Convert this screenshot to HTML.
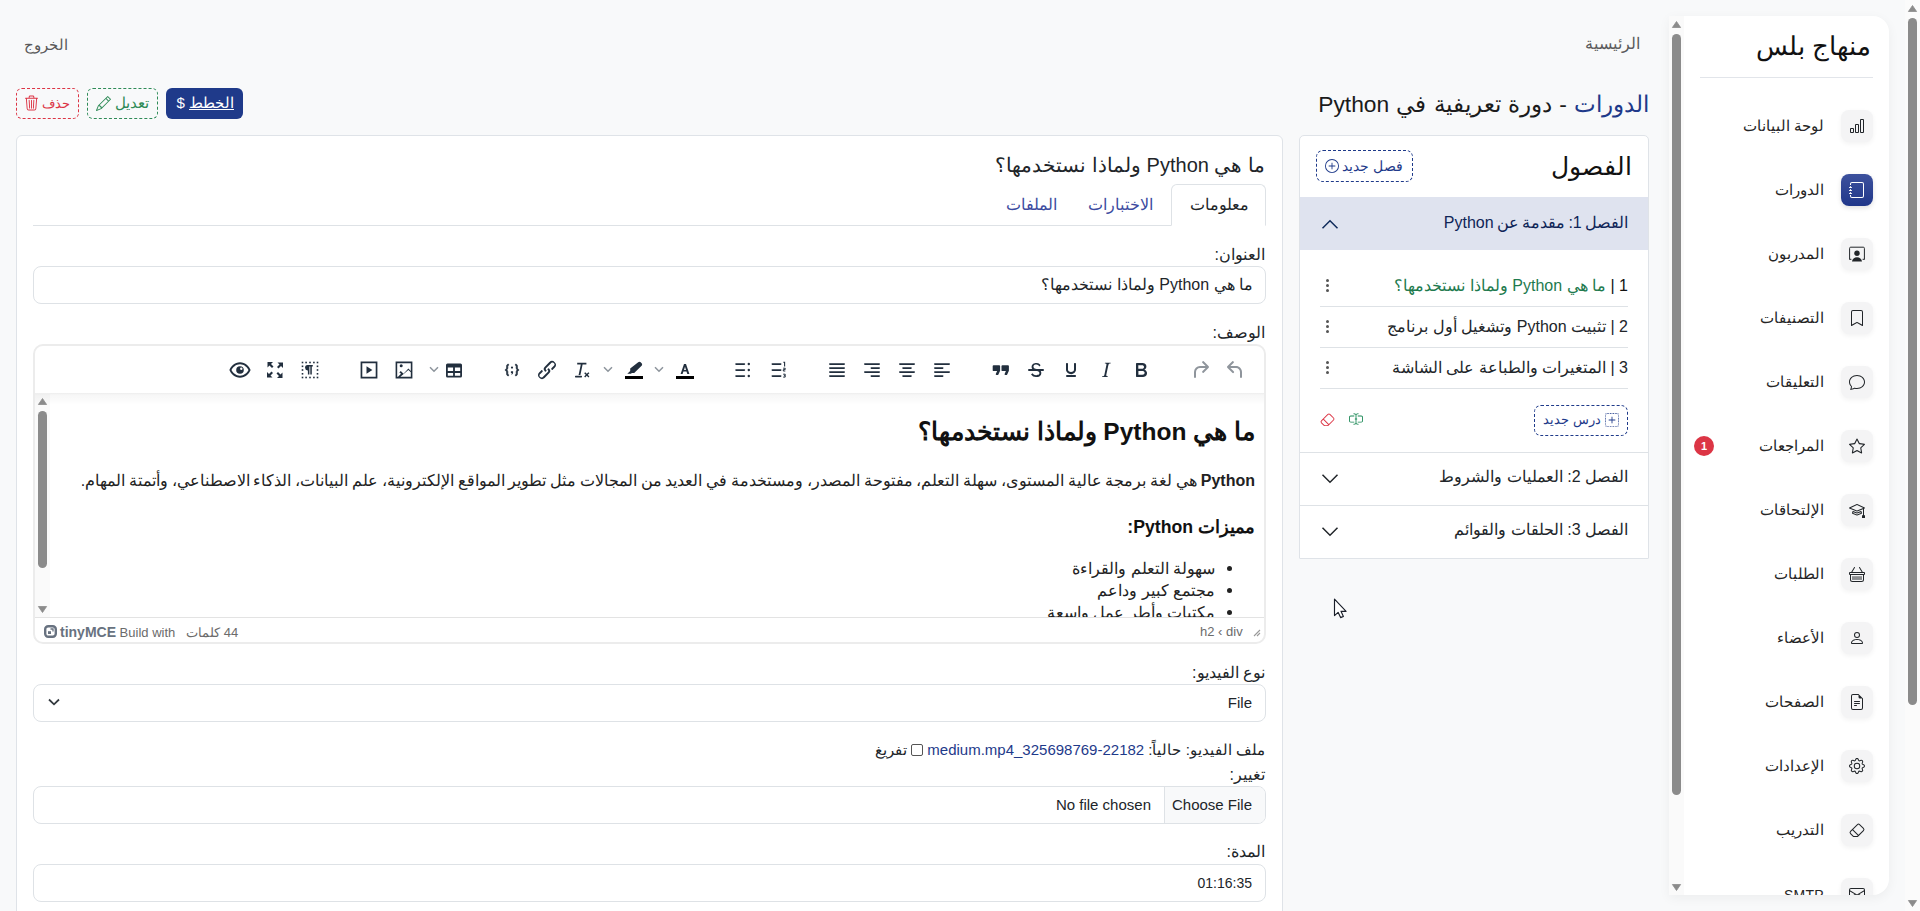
<!DOCTYPE html>
<html dir="rtl" lang="ar">
<head>
<meta charset="utf-8">
<title>منهاج بلس</title>
<style>
*{box-sizing:border-box;margin:0;padding:0}
html,body{width:1920px;height:911px;overflow:hidden}
body{background:#f8f9fa;font-family:"Liberation Sans",sans-serif;color:#212529;position:relative;font-size:16px}
.a{position:absolute;white-space:nowrap}
svg.a{display:block;overflow:visible}
.thumb{position:absolute;background:#8b8b8b;border-radius:5px}
.card{position:absolute;background:#fff;border:1px solid #dfe3e8;border-radius:6px}
</style>
</head>
<body>
<div class="a" style="left:1905px;top:0;width:15px;height:911px;background:#fbfbfb"></div>
<svg class="a" style="left:1908px;top:5px" width="9" height="7" viewBox="0 0 9 7"><path d="M4.5 0.5 L8.6 6.5 L0.4 6.5Z" fill="#8b8b8b" stroke="#8b8b8b" stroke-width="0.8" stroke-linejoin="round"/></svg>
<div class="thumb" style="left:1908px;top:18px;width:9px;height:687px"></div>
<svg class="a" style="left:1908px;top:900px" width="9" height="7" viewBox="0 0 9 7"><path d="M0.4 0.5 L8.6 0.5 L4.5 6.5Z" fill="#8b8b8b" stroke="#8b8b8b" stroke-width="0.8" stroke-linejoin="round"/></svg>
<div class="a" style="left:1669px;top:16px;width:220px;height:879px;background:#fff;border-radius:0 16px 16px 0;box-shadow:0 3px 12px rgba(0,0,0,.05)"></div>
<div class="a" style="left:1669px;top:16px;width:220px;height:879px;overflow:hidden;border-radius:0 16px 16px 0"><div class="a" style="left:0;top:0;width:15px;height:879px;background:#fafafa"></div><svg class="a" style="left:3px;top:5px" width="9" height="7" viewBox="0 0 9 7"><path d="M4.5 0.5 L8.6 6.5 L0.4 6.5Z" fill="#8b8b8b" stroke="#8b8b8b" stroke-width="0.8" stroke-linejoin="round"/></svg><div class="thumb" style="left:3px;top:18px;width:9px;height:761px"></div><svg class="a" style="left:3px;top:868px" width="9" height="7" viewBox="0 0 9 7"><path d="M0.4 0.5 L8.6 0.5 L4.5 6.5Z" fill="#8b8b8b" stroke="#8b8b8b" stroke-width="0.8" stroke-linejoin="round"/></svg><div class="a" style="right:18px;top:15px;font-size:25.5px;line-height:30px;color:#111">منهاج بلس</div><div class="a" style="left:31px;top:61px;width:173px;height:1px;background:#e2e5ea"></div><div class="a" style="left:172px;top:94px;width:32px;height:32px;border-radius:8px;background:#f4f4f5;box-shadow:0 2px 5px rgba(0,0,0,.05)"></div><svg class="a" style="left:180px;top:102px" width="16" height="16" viewBox="0 0 16 16" fill="#212529"><path d="M4 11H2v3h2zm5-4H7v7h2zm5-5v12h-2V2zm-2-1a1 1 0 0 0-1 1v12a1 1 0 0 0 1 1h2a1 1 0 0 0 1-1V2a1 1 0 0 0-1-1zM6 7a1 1 0 0 1 1-1h2a1 1 0 0 1 1 1v7a1 1 0 0 1-1 1H7a1 1 0 0 1-1-1zm-5 4a1 1 0 0 1 1-1h2a1 1 0 0 1 1 1v3a1 1 0 0 1-1 1H2a1 1 0 0 1-1-1z"/></svg><div class="a" style="right:65px;top:100px;font-size:15px;line-height:20px;color:#252525">لوحة البيانات</div><div class="a" style="left:172px;top:158px;width:32px;height:32px;border-radius:8px;background:linear-gradient(180deg,#3d519d,#20378a);box-shadow:0 2px 5px rgba(0,0,0,.12)"></div><svg class="a" style="left:180px;top:166px" width="16" height="16" viewBox="0 0 16 16" fill="#212529"><path fill="#fff" d="M3 0h10a2 2 0 0 1 2 2v12a2 2 0 0 1-2 2H3a2 2 0 0 1-2-2v-1h1v1a1 1 0 0 0 1 1h10a1 1 0 0 0 1-1V2a1 1 0 0 0-1-1H3a1 1 0 0 0-1 1v1H1V2a2 2 0 0 1 2-2"/><path fill="#fff" d="M1 5v-.5a.5.5 0 0 1 1 0V5h.5a.5.5 0 0 1 0 1h-2a.5.5 0 0 1 0-1zm0 3v-.5a.5.5 0 0 1 1 0V8h.5a.5.5 0 0 1 0 1h-2a.5.5 0 0 1 0-1zm0 3v-.5a.5.5 0 0 1 1 0v.5h.5a.5.5 0 0 1 0 1h-2a.5.5 0 0 1 0-1z"/></svg><div class="a" style="right:65px;top:164px;font-size:15px;line-height:20px;color:#252525">الدورات</div><div class="a" style="left:172px;top:222px;width:32px;height:32px;border-radius:8px;background:#f4f4f5;box-shadow:0 2px 5px rgba(0,0,0,.05)"></div><svg class="a" style="left:180px;top:230px" width="16" height="16" viewBox="0 0 16 16" fill="#212529"><path d="M.6 13.6V2.3a1.1 1.1 0 0 1 1.100-1.100h12.600a1.1 1.1 0 0 1 1.100 1.100v11.300" fill="none" stroke="#212529" stroke-width="1"/><path d="M.6 13.3h1.800M15.400 13.300h-1.800" stroke="#212529" stroke-width="1"/><circle cx="8" cy="7.3" r="2.700"/><path d="M3 15.600c.3-2.800 2.300-4.400 5-4.400s4.700 1.600 5 4.400Z"/></svg><div class="a" style="right:65px;top:228px;font-size:15px;line-height:20px;color:#252525">المدربون</div><div class="a" style="left:172px;top:286px;width:32px;height:32px;border-radius:8px;background:#f4f4f5;box-shadow:0 2px 5px rgba(0,0,0,.05)"></div><svg class="a" style="left:180px;top:294px" width="16" height="16" viewBox="0 0 16 16" fill="#212529"><path d="M2 2a2 2 0 0 1 2-2h8a2 2 0 0 1 2 2v13.5a.5.5 0 0 1-.777.416L8 13.101l-5.223 2.815A.5.5 0 0 1 2 15.5zm2-1a1 1 0 0 0-1 1v12.566l4.723-2.482a.5.5 0 0 1 .554 0L13 14.566V2a1 1 0 0 0-1-1z"/></svg><div class="a" style="right:65px;top:292px;font-size:15px;line-height:20px;color:#252525">التصنيفات</div><div class="a" style="left:172px;top:350px;width:32px;height:32px;border-radius:8px;background:#f4f4f5;box-shadow:0 2px 5px rgba(0,0,0,.05)"></div><svg class="a" style="left:180px;top:358px" width="16" height="16" viewBox="0 0 16 16" fill="#212529"><path d="M2.678 11.894a1 1 0 0 1 .287.801 11 11 0 0 1-.398 2c1.395-.323 2.247-.697 2.634-.893a1 1 0 0 1 .71-.074A8 8 0 0 0 8 14c3.996 0 7-2.807 7-6s-3.004-6-7-6-7 2.808-7 6c0 1.468.617 2.83 1.678 3.894m-.493 3.905a22 22 0 0 1-.713.129c-.2.032-.352-.176-.273-.362a10 10 0 0 0 .244-.637l.003-.01c.248-.72.45-1.548.524-2.319C.743 11.37 0 9.76 0 8c0-3.866 3.582-7 8-7s8 3.134 8 7-3.582 7-8 7a9 9 0 0 1-2.347-.306c-.52.263-1.639.742-3.468 1.105"/></svg><div class="a" style="right:65px;top:356px;font-size:15px;line-height:20px;color:#252525">التعليقات</div><div class="a" style="left:172px;top:414px;width:32px;height:32px;border-radius:8px;background:#f4f4f5;box-shadow:0 2px 5px rgba(0,0,0,.05)"></div><svg class="a" style="left:180px;top:422px" width="16" height="16" viewBox="0 0 16 16" fill="#212529"><path d="M2.866 14.85c-.078.444.36.791.746.593l4.39-2.256 4.389 2.256c.386.198.824-.149.746-.592l-.83-4.73 3.522-3.356c.33-.314.16-.888-.282-.95l-4.898-.696L8.465.792a.513.513 0 0 0-.927 0L5.354 5.12l-4.898.696c-.441.062-.612.636-.283.95l3.523 3.356-.83 4.73zm4.905-2.767-3.686 1.894.694-3.957a.56.56 0 0 0-.163-.505L1.71 6.745l4.052-.576a.53.53 0 0 0 .393-.288L8 2.223l1.847 3.658a.53.53 0 0 0 .393.288l4.052.575-2.906 2.77a.56.56 0 0 0-.163.506l.694 3.957-3.686-1.894a.5.5 0 0 0-.461 0z"/></svg><div class="a" style="right:65px;top:420px;font-size:15px;line-height:20px;color:#252525">المراجعات</div><div class="a" style="left:172px;top:478px;width:32px;height:32px;border-radius:8px;background:#f4f4f5;box-shadow:0 2px 5px rgba(0,0,0,.05)"></div><svg class="a" style="left:180px;top:486px" width="16" height="16" viewBox="0 0 16 16" fill="#212529"><path d="M8.211 2.047a.5.5 0 0 0-.422 0l-7.5 3.5a.5.5 0 0 0 .025.917l7.5 3a.5.5 0 0 0 .372 0L14 7.14V13a1 1 0 0 0-1 1v2h3v-2a1 1 0 0 0-1-1V6.739l.686-.275a.5.5 0 0 0 .025-.917zM8 8.46 1.758 5.965 8 3.052l6.242 2.913z"/><path d="M4.176 9.032a.5.5 0 0 0-.656.327l-.5 1.7a.5.5 0 0 0 .294.605l4.5 1.8a.5.5 0 0 0 .372 0l4.5-1.8a.5.5 0 0 0 .294-.605l-.5-1.7a.5.5 0 0 0-.656-.327L8 10.466zm-.068 1.873.22-.748 3.496 1.311a.5.5 0 0 0 .352 0l3.496-1.311.22.748L8 12.46z"/></svg><div class="a" style="right:65px;top:484px;font-size:15px;line-height:20px;color:#252525">الإلتحاقات</div><div class="a" style="left:172px;top:542px;width:32px;height:32px;border-radius:8px;background:#f4f4f5;box-shadow:0 2px 5px rgba(0,0,0,.05)"></div><svg class="a" style="left:180px;top:550px" width="16" height="16" viewBox="0 0 16 16" fill="#212529"><path d="M5.757 1.071a.5.5 0 0 1 .172.686L3.383 6h9.234L10.07 1.757a.5.5 0 1 1 .858-.514L13.783 6H15a1 1 0 0 1 1 1v1a1 1 0 0 1-1 1v4.5a2.5 2.5 0 0 1-2.5 2.5h-9A2.5 2.5 0 0 1 1 13.5V9a1 1 0 0 1-1-1V7a1 1 0 0 1 1-1h1.217L5.07 1.243a.5.5 0 0 1 .686-.172zM2 9v4.5A1.5 1.5 0 0 0 3.5 15h9a1.5 1.5 0 0 0 1.5-1.5V9zM1 7v1h14V7zm3 3a.5.5 0 0 1 .5.5v3a.5.5 0 0 1-1 0v-3A.5.5 0 0 1 4 10m2 0a.5.5 0 0 1 .5.5v3a.5.5 0 0 1-1 0v-3A.5.5 0 0 1 6 10m2 0a.5.5 0 0 1 .5.5v3a.5.5 0 0 1-1 0v-3A.5.5 0 0 1 8 10m2 0a.5.5 0 0 1 .5.5v3a.5.5 0 0 1-1 0v-3a.5.5 0 0 1 .5-.5m2 0a.5.5 0 0 1 .5.5v3a.5.5 0 0 1-1 0v-3a.5.5 0 0 1 .5-.5"/></svg><div class="a" style="right:65px;top:548px;font-size:15px;line-height:20px;color:#252525">الطلبات</div><div class="a" style="left:172px;top:606px;width:32px;height:32px;border-radius:8px;background:#f4f4f5;box-shadow:0 2px 5px rgba(0,0,0,.05)"></div><svg class="a" style="left:180px;top:614px" width="16" height="16" viewBox="0 0 16 16" fill="#212529"><path d="M8 8a3 3 0 1 0 0-6 3 3 0 0 0 0 6m2-3a2 2 0 1 1-4 0 2 2 0 0 1 4 0m4 8c0 1-1 1-1 1H3s-1 0-1-1 1-4 6-4 6 3 6 4m-1-.004c-.001-.246-.154-.986-.832-1.664C11.516 10.68 10.289 10 8 10s-3.516.68-4.168 1.332c-.678.678-.83 1.418-.832 1.664z"/></svg><div class="a" style="right:65px;top:612px;font-size:15px;line-height:20px;color:#252525">الأعضاء</div><div class="a" style="left:172px;top:670px;width:32px;height:32px;border-radius:8px;background:#f4f4f5;box-shadow:0 2px 5px rgba(0,0,0,.05)"></div><svg class="a" style="left:180px;top:678px" width="16" height="16" viewBox="0 0 16 16" fill="#212529"><path d="M5.5 7a.5.5 0 0 0 0 1h5a.5.5 0 0 0 0-1zM5 9.5a.5.5 0 0 1 .5-.5h5a.5.5 0 0 1 0 1h-5a.5.5 0 0 1-.5-.5m0 2a.5.5 0 0 1 .5-.5h2a.5.5 0 0 1 0 1h-2a.5.5 0 0 1-.5-.5"/><path d="M9.5 0H4a2 2 0 0 0-2 2v12a2 2 0 0 0 2 2h8a2 2 0 0 0 2-2V4.5zm0 1v2A1.5 1.5 0 0 0 11 4.5h2V14a1 1 0 0 1-1 1H4a1 1 0 0 1-1-1V2a1 1 0 0 1 1-1z"/></svg><div class="a" style="right:65px;top:676px;font-size:15px;line-height:20px;color:#252525">الصفحات</div><div class="a" style="left:172px;top:734px;width:32px;height:32px;border-radius:8px;background:#f4f4f5;box-shadow:0 2px 5px rgba(0,0,0,.05)"></div><svg class="a" style="left:180px;top:742px" width="16" height="16" viewBox="0 0 16 16" fill="#212529"><path d="M8 4.754a3.246 3.246 0 1 0 0 6.492 3.246 3.246 0 0 0 0-6.492M5.754 8a2.246 2.246 0 1 1 4.492 0 2.246 2.246 0 0 1-4.492 0"/><path d="M9.796 1.343c-.527-1.79-3.065-1.79-3.592 0l-.094.319a.873.873 0 0 1-1.255.52l-.292-.16c-1.64-.892-3.433.902-2.54 2.541l.159.292a.873.873 0 0 1-.52 1.255l-.319.094c-1.79.527-1.79 3.065 0 3.592l.319.094a.873.873 0 0 1 .52 1.255l-.16.292c-.892 1.64.901 3.434 2.541 2.54l.292-.159a.873.873 0 0 1 1.255.52l.094.319c.527 1.79 3.065 1.79 3.592 0l.094-.319a.873.873 0 0 1 1.255-.52l.292.16c1.64.893 3.434-.902 2.54-2.541l-.159-.292a.873.873 0 0 1 .52-1.255l.319-.094c1.79-.527 1.79-3.065 0-3.592l-.319-.094a.873.873 0 0 1-.52-1.255l.16-.292c.893-1.64-.902-3.433-2.541-2.54l-.292.159a.873.873 0 0 1-1.255-.52zm-2.633.283c.246-.835 1.428-.835 1.674 0l.094.319a1.873 1.873 0 0 0 2.693 1.115l.291-.16c.764-.415 1.6.42 1.184 1.185l-.159.292a1.873 1.873 0 0 0 1.116 2.692l.318.094c.835.246.835 1.428 0 1.674l-.319.094a1.873 1.873 0 0 0-1.115 2.693l.16.291c.415.764-.42 1.6-1.185 1.184l-.291-.159a1.873 1.873 0 0 0-2.693 1.116l-.094.318c-.246.835-1.428.835-1.674 0l-.094-.319a1.873 1.873 0 0 0-2.692-1.115l-.292.16c-.764.415-1.6-.42-1.184-1.185l.159-.291A1.873 1.873 0 0 0 1.945 8.93l-.319-.094c-.835-.246-.835-1.428 0-1.674l.319-.094A1.873 1.873 0 0 0 3.06 4.377l-.16-.292c-.415-.764.42-1.6 1.185-1.184l.292.159a1.873 1.873 0 0 0 2.692-1.115z"/></svg><div class="a" style="right:65px;top:740px;font-size:15px;line-height:20px;color:#252525">الإعدادات</div><div class="a" style="left:172px;top:798px;width:32px;height:32px;border-radius:8px;background:#f4f4f5;box-shadow:0 2px 5px rgba(0,0,0,.05)"></div><svg class="a" style="left:180px;top:806px" width="16" height="16" viewBox="0 0 16 16" fill="#212529"><path d="M8.086 2.207a2 2 0 0 1 2.828 0l3.879 3.879a2 2 0 0 1 0 2.828l-5.5 5.5A2 2 0 0 1 7.879 15H5.12a2 2 0 0 1-1.414-.586l-2.5-2.5a2 2 0 0 1 0-2.828zm2.121.707a1 1 0 0 0-1.414 0L4.16 7.547l5.293 5.293 4.633-4.633a1 1 0 0 0 0-1.414zM8.746 13.547 3.453 8.254 1.914 9.793a1 1 0 0 0 0 1.414l2.5 2.5a1 1 0 0 0 .707.293H7.88a1 1 0 0 0 .707-.293z"/></svg><div class="a" style="right:65px;top:804px;font-size:15px;line-height:20px;color:#252525">التدريب</div><div class="a" style="left:172px;top:862px;width:32px;height:32px;border-radius:8px;background:#f4f4f5;box-shadow:0 2px 5px rgba(0,0,0,.05)"></div><svg class="a" style="left:180px;top:870px" width="16" height="16" viewBox="0 0 16 16" fill="#212529"><path d="M0 4a2 2 0 0 1 2-2h12a2 2 0 0 1 2 2v8a2 2 0 0 1-2 2H2a2 2 0 0 1-2-2zm2-1a1 1 0 0 0-1 1v.217l7 4.2 7-4.2V4a1 1 0 0 0-1-1zm13 2.383-4.708 2.825L15 11.105zm-.034 6.876-5.64-3.471L8 9.583l-1.326-.795-5.64 3.47A1 1 0 0 0 2 13h12a1 1 0 0 0 .966-.741M1 11.105l4.708-2.897L1 5.383z"/></svg><div class="a" style="right:65px;top:868px;font-size:14px;line-height:22px;color:#252525;letter-spacing:.3px">SMTP</div><div class="a" style="left:25px;top:420px;width:20px;height:20px;border-radius:10px;background:#dc3545;color:#fff;font-size:11px;line-height:20px;text-align:center;font-weight:bold">1</div></div>
<div class="a" style="right:280px;top:34px;font-size:16px;line-height:20px;color:#5a5a5a;">الرئيسية</div>
<div class="a" style="right:1852px;top:35px;font-size:15px;line-height:20px;color:#5a5a5a;">الخروج</div>
<div class="a" style="right:271px;top:90px;font-size:22.8px;line-height:28px;color:#1b1b1b;word-spacing:0.9px"><span style="color:#1e3a8a">الدورات</span> - دورة تعريفية في Python</div>
<div class="a" style="left:166px;top:88px;width:77px;height:31px;border-radius:6px;background:#1f3a8a"></div>
<div class="a" style="right:1686px;top:93px;font-size:15px;line-height:20px;color:#fff;"><span style="text-decoration:underline;text-underline-offset:1px">الخطط</span> $</div>
<div class="a" style="left:87px;top:88px;width:71px;height:31px;border-radius:6px;border:1px dashed #2e8b57"></div>
<div class="a" style="right:1771px;top:93px;font-size:15px;line-height:20px;color:#2e8b57;">تعديل</div>
<svg class="a" style="left:96px;top:96px;" width="15" height="15" viewBox="0 0 16 16"><path fill="#2e8b57" d="M12.146.146a.5.5 0 0 1 .708 0l3 3a.5.5 0 0 1 0 .708l-10 10a.5.5 0 0 1-.168.11l-5 2a.5.5 0 0 1-.65-.65l2-5a.5.5 0 0 1 .11-.168zM11.207 2.5 13.5 4.793 14.793 3.5 12.5 1.207zm1.586 3L10.5 3.207 4 9.707V10h.5a.5.5 0 0 1 .5.5v.5h.5a.5.5 0 0 1 .5.5v.5h.293zm-9.761 5.175-.106.106-1.528 3.821 3.821-1.528.106-.106A.5.5 0 0 1 5 12.5V12h-.5a.5.5 0 0 1-.5-.5V11h-.5a.5.5 0 0 1-.468-.325"/></svg>
<div class="a" style="left:16px;top:88px;width:63px;height:31px;border-radius:6px;border:1px dashed #dc3545"></div>
<div class="a" style="right:1850px;top:94px;font-size:13px;line-height:20px;color:#dc3545;">حذف</div>
<svg class="a" style="left:24px;top:95px;" width="15" height="16" viewBox="0 0 16 16"><path fill="#dc3545" d="M6.5 1h3a.5.5 0 0 1 .5.5v1H6v-1a.5.5 0 0 1 .5-.5M11 2.5v-1A1.5 1.5 0 0 0 9.5 0h-3A1.5 1.5 0 0 0 5 1.5v1H1.5a.5.5 0 0 0 0 1h.538l.853 10.66A2 2 0 0 0 4.885 16h6.23a2 2 0 0 0 1.994-1.84l.853-10.66h.538a.5.5 0 0 0 0-1zm1.958 1-.846 10.58a1 1 0 0 1-.997.92h-6.23a1 1 0 0 1-.997-.92L3.042 3.5zm-7.487 1a.5.5 0 0 1 .528.47l.5 8.5a.5.5 0 0 1-.998.06L5 5.03a.5.5 0 0 1 .47-.53Zm5.058 0a.5.5 0 0 1 .47.53l-.5 8.5a.5.5 0 1 1-.998-.06l.5-8.5a.5.5 0 0 1 .528-.47M8 4.5a.5.5 0 0 1 .5.5v8.5a.5.5 0 0 1-1 0V5a.5.5 0 0 1 .5-.5"/></svg>
<div class="card" style="left:16px;top:135px;width:1267px;height:800px"></div>
<div class="a" style="right:655px;top:152px;font-size:20px;line-height:26px;color:#212529;">ما هي Python ولماذا نستخدمها؟</div>
<div class="a" style="left:33px;top:225px;width:1232px;height:1px;background:#dee2e6"></div>
<div class="a" style="left:1171px;top:184px;width:95px;height:42px;background:#fff;border:1px solid #dee2e6;border-bottom-color:#fff;border-radius:6px 6px 0 0"></div>
<div class="a" style="right:671px;top:194px;font-size:16px;line-height:22px;color:#212529;">معلومات</div>
<div class="a" style="right:767px;top:194px;font-size:16px;line-height:22px;color:#3c4ba0;">الاختبارات</div>
<div class="a" style="right:863px;top:194px;font-size:16px;line-height:22px;color:#3c4ba0;">الملفات</div>
<div class="a" style="right:655px;top:245px;font-size:16px;line-height:20px;color:#212529;">العنوان:</div>
<div class="a" style="left:33px;top:266px;width:1233px;height:38px;border:1px solid #dee2e6;border-radius:8px;background:#fff"></div>
<div class="a" style="right:667px;top:275px;font-size:16px;line-height:20px;color:#212529;">ما هي Python ولماذا نستخدمها؟</div>
<div class="a" style="right:655px;top:323px;font-size:16px;line-height:20px;color:#212529;">الوصف:</div>
<div class="a" style="left:33px;top:344px;width:1233px;height:300px;border:2px solid #ececec;border-radius:10px;background:#fff"></div>
<div class="a" style="left:35px;top:393px;width:1229px;height:12px;background:linear-gradient(rgba(0,0,0,.07),rgba(0,0,0,.035) 15%,rgba(0,0,0,0))"></div>
<div class="a" style="left:35px;top:617px;width:1229px;height:1px;background:#e3e3e3"></div>
<svg class="a" style="left:1223.5px;top:358px;" width="24" height="24" viewBox="0 0 24 24"><g fill="#8f959c"><path d="M6.4 8H12c3.3 0 6 2.7 6 6v5a1 1 0 0 1-2 0v-5c0-2.2-1.8-4-4-4H6.4l3.3 3.3a1 1 0 1 1-1.4 1.4l-5-5a1 1 0 0 1 0-1.4l5-5a1 1 0 0 1 1.4 1.4L6.4 8Z"/></g></svg><svg class="a" style="left:1188px;top:358px;" width="24" height="24" viewBox="0 0 24 24"><g fill="#8f959c"><path d="m17.6 10-3.3 3.3a1 1 0 0 0 1.4 1.4l5-5c.4-.4.4-1 0-1.4l-5-5a1 1 0 0 0-1.4 1.4L17.6 8H12a6 6 0 0 0-6 6v5a1 1 0 0 0 2 0v-5c0-2.2 1.8-4 4-4h5.6Z"/></g></svg><svg class="a" style="left:1128.5px;top:358px;" width="24" height="24" viewBox="0 0 24 24"><g fill="#222f3e"><path d="M7.8 19c-.3 0-.5 0-.6-.2l-.2-.5V5.7c0-.2 0-.4.2-.5l.6-.2h5c1.5 0 2.7.3 3.5 1 .7.6 1.1 1.4 1.1 2.5a3 3 0 0 1-.6 1.9c-.4.6-1 1-1.6 1.2.4.1.9.3 1.3.6s.8.7 1 1.2c.4.4.5 1 .5 1.6 0 1.3-.4 2.3-1.3 3-.8.7-2.1 1-3.8 1H7.8Zm5-8.3c.6 0 1.2-.1 1.6-.5.4-.3.6-.7.6-1.3 0-1.1-.8-1.7-2.3-1.7H9.3v3.5h3.4Zm.5 6c.7 0 1.3-.1 1.700-.4.4-.4.6-.9.6-1.5s-.2-1-.7-1.4c-.4-.3-1-.4-2-.4H9.4v3.8h4Z"/></g></svg><svg class="a" style="left:1094px;top:358px;" width="24" height="24" viewBox="0 0 24 24"><g fill="#222f3e"><path d="m16.7 4.7-.1.9h-.3c-.6 0-1 0-1.4.3-.3.3-.4.6-.5 1.1l-2.1 9.8v.6c0 .5.4.8 1.4.8h.2l-.2.8H8l.2-.8h.2c1.1 0 1.8-.5 2-1.5l2-9.8.1-.5c0-.6-.4-.8-1.4-.8h-.3l.2-.9h5.8Z"/></g></svg><svg class="a" style="left:1059px;top:358px;" width="24" height="24" viewBox="0 0 24 24"><g fill="#222f3e"><path d="M16 5c.6 0 1 .4 1 1v5.5a4 4 0 0 1-.4 1.8l-1 1.4a5.3 5.3 0 0 1-5.5 1 5 5 0 0 1-1.6-1c-.5-.4-.8-.9-1.100-1.4a4 4 0 0 1-.4-1.8V6c0-.6.4-1 1-1s1 .4 1 1v5.5c0 .3 0 .6.2 1l.6.7a3.3 3.3 0 0 0 2.2.8 3.4 3.4 0 0 0 2.2-.8c.3-.2.4-.5.6-.8l.2-.9V6c0-.6.4-1 1-1ZM8 17h8c.6 0 1 .4 1 1s-.4 1-1 1H8a1 1 0 0 1 0-2Z"/></g></svg><svg class="a" style="left:1024px;top:358px;" width="24" height="24" viewBox="0 0 24 24"><g fill="#222f3e"><path d="M15.6 8.5c-.5-.7-1-1.1-1.3-1.3-.6-.4-1.3-.6-2-.6-2.7 0-2.8 1.7-2.8 2.1 0 1.6 1.8 2 3.2 2.3 4.4.9 4.6 2.8 4.6 3.9 0 1.4-.7 4.1-5 4.1A6.2 6.2 0 0 1 7 16.4l1.5-1.1c.4.6 1.6 2 3.7 2 1.6 0 2.5-.4 3-1.2.4-.8.3-2-.8-2.6-.7-.4-1.6-.7-2.9-1-1-.2-3.9-.8-3.9-3.6C7.6 6 10.3 5 12.4 5c2.9 0 4 2 4.1 2.3l-.9 1.2Z"/><path d="M5 11h14a1 1 0 0 1 0 2H5a1 1 0 0 1 0-2Z"/></g></svg><svg class="a" style="left:989px;top:358px;" width="24" height="24" viewBox="0 0 24 24"><g fill="#222f3e"><path d="M4.6 7.2h5.6c.5 0 .9.4.9.9v4.6L9.4 16.4c-.2.4-.5.6-.9.6h-.8a.9.9 0 0 1-.8-1.3l1.2-2.6H4.6a.9.9 0 0 1-.9-.9V8.1c0-.5.4-.9.9-.9Zm8.8 0h5.6c.5 0 .9.4.9.9v4.6l-1.7 3.7c-.2.4-.5.6-.9.6h-.8a.9.9 0 0 1-.8-1.3l1.2-2.6h-3.5a.9.9 0 0 1-.9-.9V8.1c0-.5.4-.9.9-.9Z"/></g></svg><svg class="a" style="left:930px;top:358px;" width="24" height="24" viewBox="0 0 24 24"><g fill="#222f3e"><rect x="4" y="5.2" width="16" height="1.7" rx=".8"/><rect x="4" y="9.2" width="9.5" height="1.7" rx=".8"/><rect x="4" y="13.2" width="16" height="1.7" rx=".8"/><rect x="4" y="17.2" width="9.5" height="1.7" rx=".8"/></g></svg><svg class="a" style="left:895px;top:358px;" width="24" height="24" viewBox="0 0 24 24"><g fill="#222f3e"><rect x="4" y="5.2" width="16" height="1.7" rx=".8"/><rect x="7.2" y="9.2" width="9.600000000000001" height="1.7" rx=".8"/><rect x="4" y="13.2" width="16" height="1.7" rx=".8"/><rect x="7.2" y="17.2" width="9.600000000000001" height="1.7" rx=".8"/></g></svg><svg class="a" style="left:860px;top:358px;" width="24" height="24" viewBox="0 0 24 24"><g fill="#222f3e"><rect x="4" y="5.2" width="16" height="1.7" rx=".8"/><rect x="10.5" y="9.2" width="9.5" height="1.7" rx=".8"/><rect x="4" y="13.2" width="16" height="1.7" rx=".8"/><rect x="10.5" y="17.2" width="9.5" height="1.7" rx=".8"/></g></svg><svg class="a" style="left:825px;top:358px;" width="24" height="24" viewBox="0 0 24 24"><g fill="#222f3e"><rect x="4" y="5.2" width="16" height="1.7" rx=".8"/><rect x="4" y="9.2" width="16" height="1.7" rx=".8"/><rect x="4" y="13.2" width="16" height="1.7" rx=".8"/><rect x="4" y="17.2" width="16" height="1.7" rx=".8"/></g></svg><svg class="a" style="left:766.5px;top:358px;" width="24" height="24" viewBox="0 0 24 24"><g fill="#222f3e"><rect x="4.5" y="5.2" width="10.0" height="1.7" rx=".8"/><rect x="4.5" y="11.2" width="10.0" height="1.7" rx=".8"/><rect x="4.5" y="17.2" width="10.0" height="1.7" rx=".8"/><path d="M16.3 4.3h1.3v4.1" fill="none" stroke="#222f3e" stroke-width="1.1"/><path d="M16.2 10.2h2v1.4h-1.900v1.400h2" fill="none" stroke="#222f3e" stroke-width="1"/><path d="M16.2 16.2h2v1.5h-1.300M18.200 17.700v1.400h-2" fill="none" stroke="#222f3e" stroke-width="1"/></g></svg><svg class="a" style="left:730.7px;top:358px;" width="24" height="24" viewBox="0 0 24 24"><g fill="#222f3e"><rect x="4.2" y="5.2" width="10.0" height="1.7" rx=".8"/><rect x="4.2" y="11.2" width="10.0" height="1.7" rx=".8"/><rect x="4.2" y="17.2" width="10.0" height="1.7" rx=".8"/><circle cx="17.8" cy="6" r="1.2"/><circle cx="17.8" cy="12" r="1.2"/><circle cx="17.8" cy="18" r="1.2"/></g></svg><svg class="a" style="left:673px;top:358px;" width="24" height="24" viewBox="0 0 24 24"><g fill="#222f3e"><path d="M7.6 16 11 6h2l3.4 10h-2.1l-.8-2.4h-3.100l-.8 2.4Zm3.400-4.100h2l-1-3.100Z"/><rect x="3" y="18" width="18" height="3" fill="#000"/></g></svg><svg class="a" style="left:654px;top:366px;" width="10" height="7" viewBox="0 0 10 7"><path d="M1 1.2 5 5.2 9 1.2" fill="none" stroke="#8d949c" stroke-width="1.5"/></svg><svg class="a" style="left:622px;top:358px;" width="24" height="24" viewBox="0 0 24 24"><g fill="#222f3e"><path d="M16.2 4.3c.7-.7 1.8-.7 2.5 0l.9.9c.7.7.7 1.8 0 2.5L12.2 15H9.8l-.8.8H5.3l2.9-2.9v-2.5Zm-6.4 7.3 2.5 2.5" /><rect x="3" y="18" width="18" height="3" fill="#000"/></g></svg><svg class="a" style="left:603px;top:366px;" width="10" height="7" viewBox="0 0 10 7"><path d="M1 1.2 5 5.2 9 1.2" fill="none" stroke="#8d949c" stroke-width="1.5"/></svg><svg class="a" style="left:569.5px;top:358px;" width="24" height="24" viewBox="0 0 24 24"><g fill="#222f3e"><path d="M7.2 4.8h9.2v1.6h-3.8L10.4 17H8.6l2.2-10.6H7.2Z"/><rect x="5" y="17.8" width="7" height="1.6" rx=".6"/><path d="m14.2 15.2 1-1 1.6 1.6 1.6-1.6 1 1-1.6 1.6 1.6 1.6-1 1-1.6-1.6-1.6 1.6-1-1 1.6-1.6Z"/></g></svg><svg class="a" style="left:535px;top:358px;" width="24" height="24" viewBox="0 0 24 24"><g fill="#222f3e"><path d="M6.2 12.3a1 1 0 0 1 1.4 1.4l-2 2a2 2 0 1 0 2.6 2.8l4.8-4.8a1 1 0 0 0 0-1.4 1 1 0 1 1 1.4-1.3 2.9 2.9 0 0 1 0 4L9.6 20a3.9 3.9 0 0 1-5.5-5.5l2-2Zm11.6-.6a1 1 0 0 1-1.4-1.4l2-2a2 2 0 1 0-2.6-2.8L11 10.3a1 1 0 0 0 0 1.4A1 1 0 1 1 9.6 13a2.9 2.9 0 0 1 0-4L14.4 4a3.9 3.9 0 0 1 5.5 5.5l-2 2Z"/></g></svg><svg class="a" style="left:500px;top:358px;" width="24" height="24" viewBox="0 0 24 24"><g fill="#222f3e"><path stroke="#222f3e" stroke-width=".7" d="M8.6 6.2c-1.4 0-2 .6-2 1.9v1.9c0 .9-.4 1.4-1.3 1.5v1c.9.1 1.3.6 1.3 1.5v1.9c0 1.3.6 1.9 2 1.9v-1.1c-.6 0-.8-.3-.8-1v-1.9c0-1-.4-1.6-1.1-1.9.7-.3 1.100-.9 1.100-1.900V8.300c0-.7.2-1 .8-1Zm6.800 0c1.400 0 2 .6 2 1.900v1.900c0 .9.4 1.400 1.300 1.500v1c-.9.100-1.300.600-1.300 1.500v1.900c0 1.300-.6 1.900-2 1.900v-1.100c.6 0 .8-.3.8-1v-1.900c0-1 .4-1.600 1.100-1.900-.7-.3-1.100-.9-1.100-1.900V8.300c0-.7-.2-1-.8-1Z"/><circle cx="12" cy="9.6" r="1.1"/><path d="M10.9 13.2h2.200v1.300c0 1-.5 1.800-1.400 2.200l-.4-.6c.4-.3.6-.7.6-1.100h-1Z"/></g></svg><svg class="a" style="left:442px;top:358px;" width="24" height="24" viewBox="0 0 24 24"><g fill="#222f3e"><path d="M5.5 5.5h13a1.5 1.5 0 0 1 1.5 1.5v11a1.5 1.5 0 0 1-1.5 1.5h-13A1.5 1.5 0 0 1 4 18V7a1.5 1.5 0 0 1 1.5-1.5Zm.3 4v3.6h5.3V9.5Zm7.1 0v3.6h5.3V9.5Zm-7.1 5.4v2.8h5.3v-2.8Zm7.1 0v2.8h5.3v-2.8Z"/></g></svg><svg class="a" style="left:429px;top:366px;" width="10" height="7" viewBox="0 0 10 7"><path d="M1 1.2 5 5.2 9 1.2" fill="none" stroke="#8d949c" stroke-width="1.5"/></svg><svg class="a" style="left:392px;top:358px;" width="24" height="24" viewBox="0 0 24 24"><g fill="#222f3e"><path d="M3.6 3.6h16.8v16.8H3.6Zm1.6 1.6v11.4l3.6-3.6 2.7 2.7 4.9-5.1 2.4 2.4V5.2Zm0 13.6h.8l3-3-1.6-1.6-2.2 2.2Zm3.2 0h10.4v-4.5l-2.4-2.4Z"/><circle cx="9.2" cy="7.8" r="1.5"/></g></svg><svg class="a" style="left:357px;top:358px;" width="24" height="24" viewBox="0 0 24 24"><g fill="#222f3e"><path d="M3.6 3.6h16.8v16.8H3.6Zm1.7 1.7v13.4h13.4V5.3Z"/><path d="M9.5 8.2v7.6l5.9-3.8Z"/></g></svg><svg class="a" style="left:298px;top:358px;" width="24" height="24" viewBox="0 0 24 24"><g fill="#222f3e"><rect x="3.7" y="3.7" width="1.6" height="1.6"/><rect x="7.3" y="3.7" width="1.6" height="1.6"/><rect x="11.2" y="3.7" width="1.6" height="1.6"/><rect x="15.1" y="3.7" width="1.6" height="1.6"/><rect x="18.7" y="3.7" width="1.6" height="1.6"/><rect x="3.7" y="7.5" width="1.6" height="1.6"/><rect x="18.7" y="7.5" width="1.6" height="1.6"/><rect x="3.7" y="11.2" width="1.6" height="1.6"/><rect x="18.7" y="11.2" width="1.6" height="1.6"/><rect x="3.7" y="15" width="1.6" height="1.6"/><rect x="18.7" y="15" width="1.6" height="1.6"/><rect x="3.7" y="18.7" width="1.6" height="1.6"/><rect x="7.3" y="18.7" width="1.6" height="1.6"/><rect x="11.2" y="18.7" width="1.6" height="1.6"/><rect x="15.1" y="18.7" width="1.6" height="1.6"/><rect x="18.7" y="18.7" width="1.6" height="1.6"/><path d="M9.6 7h5.2v1.4h-1v8.2h-1.5V8.4h-.9v8.2H9.9v-4.2a2.7 2.7 0 0 1-.3-5.4Z"/></g></svg><svg class="a" style="left:263px;top:358px;" width="24" height="24" viewBox="0 0 24 24"><g fill="#222f3e"><path d="M4 4h6l-2 2 2.5 2.5-1.5 1.5L6.5 7.5 4.5 9.5V4Zm16 0v6l-2-2-2.5 2.5-1.5-1.5L16.5 6.5 14.5 4.5H20ZM4 20v-6l2 2 2.5-2.5 1.5 1.5-2.5 2.5 2 2H4Zm16 0h-6l2-2-2.5-2.5 1.5-1.5 2.5 2.5 2-2V20Z"/></g></svg><svg class="a" style="left:228px;top:358px;" width="24" height="24" viewBox="0 0 24 24"><g fill="#222f3e"><path d="M12 4.2c5.300 0 9.300 4.300 10.600 7.800-1.300 3.500-5.300 7.800-10.600 7.800S2.700 15.500 1.400 12C2.700 8.500 6.700 4.200 12 4.200Zm0 2.100c-4.100 0-7.300 3.100-8.500 5.700 1.200 2.600 4.400 5.700 8.500 5.700s7.300-3.100 8.500-5.700c-1.200-2.600-4.400-5.700-8.500-5.700Z"/><circle cx="12" cy="12" r="3.800"/><circle cx="13.300" cy="10.700" r="1.200" fill="#fff"/></g></svg>
<div class="a" style="left:35px;top:394px;width:15px;height:223px;background:rgba(0,0,0,.02)"></div>
<svg class="a" style="left:38px;top:398px" width="9" height="7" viewBox="0 0 9 7"><path d="M4.5 0.5 L8.6 6.5 L0.4 6.5Z" fill="#8b8b8b" stroke="#8b8b8b" stroke-width="0.8" stroke-linejoin="round"/></svg>
<div class="thumb" style="left:38px;top:411px;width:9px;height:157px"></div>
<svg class="a" style="left:38px;top:606px" width="9" height="7" viewBox="0 0 9 7"><path d="M0.4 0.5 L8.6 0.5 L4.5 6.5Z" fill="#8b8b8b" stroke="#8b8b8b" stroke-width="0.8" stroke-linejoin="round"/></svg>
<div class="a" style="right:665px;top:415px;font-size:24.5px;line-height:34px;color:#111;font-weight:bold">ما هي Python ولماذا نستخدمها؟</div>
<div class="a" style="right:665px;top:471px;font-size:16px;line-height:20px;color:#222;word-spacing:-0.67px"><b>Python</b> هي لغة برمجة عالية المستوى، سهلة التعلم، مفتوحة المصدر، ومستخدمة في العديد من المجالات مثل تطوير المواقع الإلكترونية، علم البيانات، الذكاء الاصطناعي، وأتمتة المهام.</div>
<div class="a" style="right:665px;top:515px;font-size:17.7px;line-height:24px;color:#111;font-weight:bold">مميزات Python:</div>
<div class="a" style="left:36px;top:396px;width:1226px;height:221px;overflow:hidden"><div class="a" style="right:47px;top:162px;font-size:16px;line-height:22px;color:#222">سهولة التعلم والقراءة</div><div class="a" style="right:47px;top:184px;font-size:16px;line-height:22px;color:#222">مجتمع كبير وداعم</div><div class="a" style="right:47px;top:206px;font-size:16px;line-height:22px;color:#222">مكتبات وأطر عمل واسعة</div><div class="a" style="left:1191px;top:170px;width:5px;height:5px;border-radius:3px;background:#222"></div><div class="a" style="left:1191px;top:192px;width:5px;height:5px;border-radius:3px;background:#222"></div><div class="a" style="left:1191px;top:214px;width:5px;height:5px;border-radius:3px;background:#222"></div></div>
<div class="a" style="left:45px;top:624px;font-size:13px;line-height:16px;color:#6b6b6b;direction:ltr"><span style="display:inline-block;width:15px"></span><span style="font-weight:bold;color:#687280;font-size:14px">tinyMCE</span> Build with&nbsp;&nbsp; <span dir="rtl" style="unicode-bidi:isolate">44 كلمات</span></div>
<svg class="a" style="left:44px;top:625px;" width="13" height="13" viewBox="0 0 13 13"><rect x="1.2" y="1.2" width="10.6" height="10.6" rx="3" fill="none" stroke="#687280" stroke-width="2.4"/><path d="M4 6.2h3v2.8H4Z" fill="#687280"/><path d="M6.5 4h2.5v2.5" fill="none" stroke="#687280" stroke-width="1.3"/></svg>
<div class="a" style="left:1200px;top:624px;font-size:13px;line-height:16px;color:#6b6b6b;direction:ltr">h2 &#8249; div</div>
<svg class="a" style="left:1251px;top:627px;" width="10" height="10" viewBox="0 0 10 10"><path d="M9 3 3 9M9 6 6 9" stroke="#999" stroke-width="1.1"/></svg>
<div class="a" style="right:655px;top:663px;font-size:16px;line-height:20px;color:#212529;">نوع الفيديو:</div>
<div class="a" style="left:33px;top:684px;width:1233px;height:38px;border:1px solid #dee2e6;border-radius:8px;background:#fff"></div>
<div class="a" style="right:668px;top:693px;font-size:15px;line-height:20px;color:#212529;">File</div>
<svg class="a" style="left:48px;top:698px;" width="12" height="8" viewBox="0 0 12 8"><path d="M1 1.5 6 6.3 11 1.5" fill="none" stroke="#343a40" stroke-width="1.8"/></svg>
<div class="a" style="right:655px;top:740px;font-size:15px;line-height:20px;color:#212529;">ملف الفيديو: حالياً: <span style="color:#1e3a8a">medium.mp4_325698769-22182</span> <span style="display:inline-block;width:12px;height:12px;border:1px solid #555;border-radius:2px;vertical-align:-1px;background:#fff"></span> تفريغ</div>
<div class="a" style="right:655px;top:765px;font-size:16px;line-height:20px;color:#212529;">تغيير:</div>
<div class="a" style="left:33px;top:786px;width:1233px;height:38px;border:1px solid #dee2e6;border-radius:8px;background:#fff;overflow:hidden"><div class="a" style="right:0;top:0;width:101px;height:38px;background:#f8f9fa;border-left:1px solid #dee2e6"></div></div>
<div class="a" style="right:668px;top:795px;font-size:15px;line-height:20px;color:#212529;">Choose File</div>
<div class="a" style="right:769px;top:795px;font-size:15px;line-height:20px;color:#212529;">No file chosen</div>
<div class="a" style="right:655px;top:842px;font-size:16px;line-height:20px;color:#212529;">المدة:</div>
<div class="a" style="left:33px;top:864px;width:1233px;height:38px;border:1px solid #dee2e6;border-radius:8px;background:#fff"></div>
<div class="a" style="right:668px;top:873px;font-size:14px;line-height:20px;color:#212529;">01:16:35</div>
<div class="card" style="left:1299px;top:135px;width:350px;height:424px;border-radius:5px 5px 1px 1px"></div>
<div class="a" style="right:288px;top:151px;font-size:25px;line-height:30px;color:#111;">الفصول</div>
<div class="a" style="left:1316px;top:150px;width:97px;height:32px;border-radius:7px;border:1px dashed #1e3a8a"></div>
<div class="a" style="right:517px;top:156px;font-size:14px;line-height:20px;color:#1e3a8a;">فصل جديد</div>
<svg class="a" style="left:1325px;top:159px;" width="14" height="14" viewBox="0 0 16 16"><path fill="#1e3a8a" d="M8 15A7 7 0 1 1 8 1a7 7 0 0 1 0 14m0 1A8 8 0 1 0 8 0a8 8 0 0 0 0 16"/><path fill="#1e3a8a" d="M8 4a.5.5 0 0 1 .5.5v3h3a.5.5 0 0 1 0 1h-3v3a.5.5 0 0 1-1 0v-3h-3a.5.5 0 0 1 0-1h3v-3A.5.5 0 0 1 8 4"/></svg>
<div class="a" style="left:1300px;top:197px;width:348px;height:53px;background:#dfe3ef"></div>
<div class="a" style="right:292px;top:213px;font-size:16px;line-height:20px;color:#0f2557;word-spacing:-1.2px">الفصل 1: مقدمة عن Python</div>
<svg class="a" style="left:1321px;top:219px;" width="18" height="11" viewBox="0 0 18 11"><path d="M1.5 9.3 9 1.8l7.5 7.5" fill="none" stroke="#0f2b5b" stroke-width="1.5"/></svg>
<div class="a" style="right:292px;top:276px;font-size:16px;line-height:20px;color:#1e7a4e;"><span style="color:#111">1 |</span> ما هي Python ولماذا نستخدمها؟</div>
<div class="a" style="left:1326px;top:279px;width:3px;height:3px;border-radius:2px;background:#555"></div><div class="a" style="left:1326px;top:284px;width:3px;height:3px;border-radius:2px;background:#555"></div><div class="a" style="left:1326px;top:289px;width:3px;height:3px;border-radius:2px;background:#555"></div>
<div class="a" style="left:1320px;top:306px;width:308px;height:1px;background:#dee2e6"></div>
<div class="a" style="right:292px;top:317px;font-size:16px;line-height:20px;color:#212529;">2 | تثبيت Python وتشغيل أول برنامج</div>
<div class="a" style="left:1326px;top:320px;width:3px;height:3px;border-radius:2px;background:#555"></div><div class="a" style="left:1326px;top:325px;width:3px;height:3px;border-radius:2px;background:#555"></div><div class="a" style="left:1326px;top:330px;width:3px;height:3px;border-radius:2px;background:#555"></div>
<div class="a" style="left:1320px;top:347px;width:308px;height:1px;background:#dee2e6"></div>
<div class="a" style="right:292px;top:358px;font-size:16px;line-height:20px;color:#212529;">3 | المتغيرات والطباعة على الشاشة</div>
<div class="a" style="left:1326px;top:361px;width:3px;height:3px;border-radius:2px;background:#555"></div><div class="a" style="left:1326px;top:366px;width:3px;height:3px;border-radius:2px;background:#555"></div><div class="a" style="left:1326px;top:371px;width:3px;height:3px;border-radius:2px;background:#555"></div>
<div class="a" style="left:1320px;top:388px;width:308px;height:1px;background:#dee2e6"></div>
<div class="a" style="left:1534px;top:405px;width:94px;height:31px;border-radius:7px;border:1px dashed #1e3a8a"></div>
<div class="a" style="right:319px;top:410px;font-size:13px;line-height:20px;color:#1e3a8a;">درس جديد</div>
<svg class="a" style="left:1605px;top:413px;" width="14" height="14" viewBox="0 0 16 16"><path fill="#1e3a8a" d="M2.5 0q-.25 0-.487.048l.194.98A1.5 1.5 0 0 1 2.5 1h.458V0zm2.292 0h-.917v1h.917zm1.833 0h-.917v1h.917zm1.833 0h-.916v1h.916zm1.834 0h-.917v1h.917zm1.833 0h-.917v1h.917zM13.5 0h-.458v1h.458q.151 0 .293.029l.194-.981A2.5 2.5 0 0 0 13.5 0m2.079 1.11a2.5 2.5 0 0 0-.69-.689l-.556.831q.248.167.415.415l.83-.556zM1.11.421a2.5 2.5 0 0 0-.689.69l.831.556c.11-.164.251-.305.415-.415zM16 2.5q0-.25-.048-.487l-.98.194q.027.141.028.293v.458h1zM.048 2.013A2.5 2.5 0 0 0 0 2.5v.458h1V2.5q0-.151.029-.293zM0 3.875v.917h1v-.917zm16 .917v-.917h-1v.917zM0 5.708v.917h1v-.917zm16 .917v-.917h-1v.917zM0 7.542v.916h1v-.916zm15 .916h1v-.916h-1zM0 9.375v.917h1v-.917zm16 .917v-.917h-1v.917zm-16 .916v.917h1v-.917zm16 .917v-.917h-1v.917zm-16 .917v.458q0 .25.048.487l.98-.194A1.5 1.5 0 0 1 1 13.5v-.458zm16 .458v-.458h-1v.458q0 .151-.029.293l.981.194Q16 13.75 16 13.5M.421 14.89c.183.272.417.506.69.689l.556-.831a1.5 1.5 0 0 1-.415-.415zm14.469.689c.272-.183.506-.417.689-.69l-.831-.556c-.11.164-.251.305-.415.415l.556.83zm-12.877.373Q2.25 16 2.5 16h.458v-1H2.5q-.151 0-.293-.029zM13.5 16q.25 0 .487-.048l-.194-.98A1.5 1.5 0 0 1 13.5 15h-.458v1zm-9.625 0h.917v-1h-.917zm1.833 0h.917v-1h-.917zm1.834-1v1h.916v-1zm1.833 1h.917v-1h-.917zm1.833 0h.917v-1h-.917zM8.5 4.5a.5.5 0 0 0-1 0v3h-3a.5.5 0 0 0 0 1h3v3a.5.5 0 0 0 1 0v-3h3a.5.5 0 0 0 0-1h-3z"/></svg>
<svg class="a" style="left:1320px;top:412px;" width="15" height="15" viewBox="0 0 16 16"><g fill="#dc3545"><path d="M8.086 2.207a2 2 0 0 1 2.828 0l3.879 3.879a2 2 0 0 1 0 2.828l-5.5 5.5A2 2 0 0 1 7.879 15H5.12a2 2 0 0 1-1.414-.586l-2.5-2.5a2 2 0 0 1 0-2.828zm2.121.707a1 1 0 0 0-1.414 0L4.16 7.547l5.293 5.293 4.633-4.633a1 1 0 0 0 0-1.414zM8.746 13.547 3.453 8.254 1.914 9.793a1 1 0 0 0 0 1.414l2.5 2.5a1 1 0 0 0 .707.293H7.88a1 1 0 0 0 .707-.293z"/></g></svg>
<svg class="a" style="left:1348px;top:412px;" width="16" height="14" viewBox="0 0 16 16"><path fill="#198754" d="M5 2a.5.5 0 0 1 .5-.5c.862 0 1.573.287 2.06.566.174.099.321.198.44.286.119-.088.266-.187.44-.286A4.17 4.17 0 0 1 10.5 1.5a.5.5 0 0 1 0 1c-.638 0-1.177.213-1.564.434a3.5 3.5 0 0 0-.436.294V7.5H9a.5.5 0 0 1 0 1h-.5v4.272c.1.08.248.187.436.294.387.221.926.434 1.564.434a.5.5 0 0 1 0 1 4.17 4.17 0 0 1-2.06-.566A5 5 0 0 1 8 13.65a5 5 0 0 1-.44.285 4.17 4.17 0 0 1-2.06.566.5.5 0 0 1 0-1c.638 0 1.177-.213 1.564-.434.188-.107.335-.214.436-.294V8.5H7a.5.5 0 0 1 0-1h.5V3.228a3.5 3.5 0 0 0-.436-.294A3.17 3.17 0 0 0 5.5 2.5.5.5 0 0 1 5 2"/><path fill="#198754" d="M10 5h4a1 1 0 0 1 1 1v4a1 1 0 0 1-1 1h-4v1h4a2 2 0 0 0 2-2V6a2 2 0 0 0-2-2h-4zM6 5V4H2a2 2 0 0 0-2 2v4a2 2 0 0 0 2 2h4v-1H2a1 1 0 0 1-1-1V6a1 1 0 0 1 1-1z"/></svg>
<div class="a" style="left:1300px;top:452px;width:348px;height:1px;background:#dee2e6"></div>
<div class="a" style="right:292px;top:467px;font-size:16px;line-height:20px;color:#212529;">الفصل 2: العمليات والشروط</div>
<svg class="a" style="left:1321px;top:473px;" width="18" height="11" viewBox="0 0 18 11"><path d="M1.5 1.7 9 9.2l7.5-7.5" fill="none" stroke="#212529" stroke-width="1.5"/></svg>
<div class="a" style="left:1300px;top:505px;width:348px;height:1px;background:#dee2e6"></div>
<div class="a" style="right:292px;top:520px;font-size:16px;line-height:20px;color:#212529;">الفصل 3: الحلقات والقوائم</div>
<svg class="a" style="left:1321px;top:526px;" width="18" height="11" viewBox="0 0 18 11"><path d="M1.5 1.7 9 9.2l7.5-7.5" fill="none" stroke="#212529" stroke-width="1.5"/></svg>
<svg class="a" style="left:1333px;top:598px;" width="14" height="21" viewBox="0 0 14 21"><path d="M1.5 1.2V17.6l3.6-3.3 2.5 5.3 2.8-1.2-2.4-5.1h5.1Z" fill="#fff" stroke="#1a1f29" stroke-width="1.15" stroke-linejoin="round"/></svg>
</body>
</html>
